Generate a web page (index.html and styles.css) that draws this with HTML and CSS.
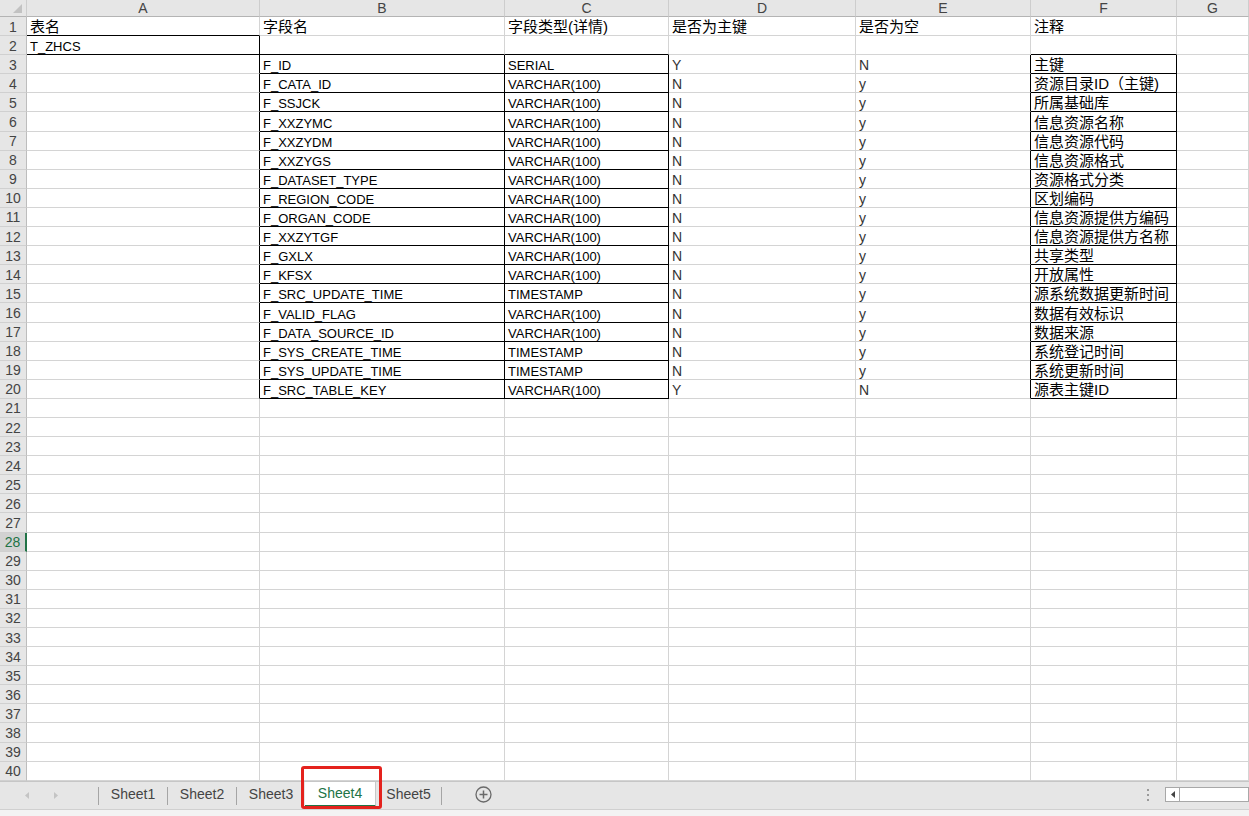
FILE: index.html
```html
<!DOCTYPE html>
<html lang="zh-CN">
<head>
<meta charset="utf-8">
<title>Sheet4</title>
<link rel="stylesheet" href="styles.css">
</head>
<body>
<div class="app">
  <div class="sheet">
    <div class="row hdr">
      <div class="corner"><svg width="9" height="9" viewBox="0 0 9 9"><polygon points="9,0 9,9 0,9" fill="#c2c2c2"/></svg></div>
      <div>A</div><div>B</div><div>C</div><div>D</div><div>E</div><div>F</div><div>G</div>
    </div>
    <div class="body">
      <div class="row"><div class="rh">1</div><div class="c b cn">表名</div><div class="c cn">字段名</div><div class="c cn">字段类型(详情)</div><div class="c cn">是否为主键</div><div class="c cn">是否为空</div><div class="c cn">注释</div><div class="c"></div></div>
      <div class="row"><div class="rh">2</div><div class="c r b">T_ZHCS</div><div class="c b"></div><div class="c b"></div><div class="c"></div><div class="c"></div><div class="c b"></div><div class="c"></div></div>
      <div class="row"><div class="rh">3</div><div class="c r"></div><div class="c r b">F_ID</div><div class="c r b">SERIAL</div><div class="c yn">Y</div><div class="c r yn">N</div><div class="c r b cn">主键</div><div class="c"></div></div>
      <div class="row"><div class="rh">4</div><div class="c r"></div><div class="c r b">F_CATA_ID</div><div class="c r b">VARCHAR(100)</div><div class="c yn">N</div><div class="c r yn">y</div><div class="c r b cn">资源目录ID（主键)</div><div class="c"></div></div>
      <div class="row"><div class="rh">5</div><div class="c r"></div><div class="c r b">F_SSJCK</div><div class="c r b">VARCHAR(100)</div><div class="c yn">N</div><div class="c r yn">y</div><div class="c r b cn">所属基础库</div><div class="c"></div></div>
      <div class="row"><div class="rh">6</div><div class="c r"></div><div class="c r b">F_XXZYMC</div><div class="c r b">VARCHAR(100)</div><div class="c yn">N</div><div class="c r yn">y</div><div class="c r b cn">信息资源名称</div><div class="c"></div></div>
      <div class="row"><div class="rh">7</div><div class="c r"></div><div class="c r b">F_XXZYDM</div><div class="c r b">VARCHAR(100)</div><div class="c yn">N</div><div class="c r yn">y</div><div class="c r b cn">信息资源代码</div><div class="c"></div></div>
      <div class="row"><div class="rh">8</div><div class="c r"></div><div class="c r b">F_XXZYGS</div><div class="c r b">VARCHAR(100)</div><div class="c yn">N</div><div class="c r yn">y</div><div class="c r b cn">信息资源格式</div><div class="c"></div></div>
      <div class="row"><div class="rh">9</div><div class="c r"></div><div class="c r b">F_DATASET_TYPE</div><div class="c r b">VARCHAR(100)</div><div class="c yn">N</div><div class="c r yn">y</div><div class="c r b cn">资源格式分类</div><div class="c"></div></div>
      <div class="row"><div class="rh">10</div><div class="c r"></div><div class="c r b">F_REGION_CODE</div><div class="c r b">VARCHAR(100)</div><div class="c yn">N</div><div class="c r yn">y</div><div class="c r b cn">区划编码</div><div class="c"></div></div>
      <div class="row"><div class="rh">11</div><div class="c r"></div><div class="c r b">F_ORGAN_CODE</div><div class="c r b">VARCHAR(100)</div><div class="c yn">N</div><div class="c r yn">y</div><div class="c r b cn">信息资源提供方编码</div><div class="c"></div></div>
      <div class="row"><div class="rh">12</div><div class="c r"></div><div class="c r b">F_XXZYTGF</div><div class="c r b">VARCHAR(100)</div><div class="c yn">N</div><div class="c r yn">y</div><div class="c r b cn">信息资源提供方名称</div><div class="c"></div></div>
      <div class="row"><div class="rh">13</div><div class="c r"></div><div class="c r b">F_GXLX</div><div class="c r b">VARCHAR(100)</div><div class="c yn">N</div><div class="c r yn">y</div><div class="c r b cn">共享类型</div><div class="c"></div></div>
      <div class="row"><div class="rh">14</div><div class="c r"></div><div class="c r b">F_KFSX</div><div class="c r b">VARCHAR(100)</div><div class="c yn">N</div><div class="c r yn">y</div><div class="c r b cn">开放属性</div><div class="c"></div></div>
      <div class="row"><div class="rh">15</div><div class="c r"></div><div class="c r b">F_SRC_UPDATE_TIME</div><div class="c r b">TIMESTAMP</div><div class="c yn">N</div><div class="c r yn">y</div><div class="c r b cn">源系统数据更新时间</div><div class="c"></div></div>
      <div class="row"><div class="rh">16</div><div class="c r"></div><div class="c r b">F_VALID_FLAG</div><div class="c r b">VARCHAR(100)</div><div class="c yn">N</div><div class="c r yn">y</div><div class="c r b cn">数据有效标识</div><div class="c"></div></div>
      <div class="row"><div class="rh">17</div><div class="c r"></div><div class="c r b">F_DATA_SOURCE_ID</div><div class="c r b">VARCHAR(100)</div><div class="c yn">N</div><div class="c r yn">y</div><div class="c r b cn">数据来源</div><div class="c"></div></div>
      <div class="row"><div class="rh">18</div><div class="c r"></div><div class="c r b">F_SYS_CREATE_TIME</div><div class="c r b">TIMESTAMP</div><div class="c yn">N</div><div class="c r yn">y</div><div class="c r b cn">系统登记时间</div><div class="c"></div></div>
      <div class="row"><div class="rh">19</div><div class="c r"></div><div class="c r b">F_SYS_UPDATE_TIME</div><div class="c r b">TIMESTAMP</div><div class="c yn">N</div><div class="c r yn">y</div><div class="c r b cn">系统更新时间</div><div class="c"></div></div>
      <div class="row"><div class="rh">20</div><div class="c r"></div><div class="c r b">F_SRC_TABLE_KEY</div><div class="c r b">VARCHAR(100)</div><div class="c yn">Y</div><div class="c r yn">N</div><div class="c r b cn">源表主键ID</div><div class="c"></div></div>
      <div class="row"><div class="rh">21</div><div class="c"></div><div class="c"></div><div class="c"></div><div class="c"></div><div class="c"></div><div class="c"></div><div class="c"></div></div>
      <div class="row"><div class="rh">22</div><div class="c"></div><div class="c"></div><div class="c"></div><div class="c"></div><div class="c"></div><div class="c"></div><div class="c"></div></div>
      <div class="row"><div class="rh">23</div><div class="c"></div><div class="c"></div><div class="c"></div><div class="c"></div><div class="c"></div><div class="c"></div><div class="c"></div></div>
      <div class="row"><div class="rh">24</div><div class="c"></div><div class="c"></div><div class="c"></div><div class="c"></div><div class="c"></div><div class="c"></div><div class="c"></div></div>
      <div class="row"><div class="rh">25</div><div class="c"></div><div class="c"></div><div class="c"></div><div class="c"></div><div class="c"></div><div class="c"></div><div class="c"></div></div>
      <div class="row"><div class="rh">26</div><div class="c"></div><div class="c"></div><div class="c"></div><div class="c"></div><div class="c"></div><div class="c"></div><div class="c"></div></div>
      <div class="row"><div class="rh">27</div><div class="c"></div><div class="c"></div><div class="c"></div><div class="c"></div><div class="c"></div><div class="c"></div><div class="c"></div></div>
      <div class="row"><div class="rh sel">28</div><div class="c"></div><div class="c"></div><div class="c"></div><div class="c"></div><div class="c"></div><div class="c"></div><div class="c"></div></div>
      <div class="row"><div class="rh">29</div><div class="c"></div><div class="c"></div><div class="c"></div><div class="c"></div><div class="c"></div><div class="c"></div><div class="c"></div></div>
      <div class="row"><div class="rh">30</div><div class="c"></div><div class="c"></div><div class="c"></div><div class="c"></div><div class="c"></div><div class="c"></div><div class="c"></div></div>
      <div class="row"><div class="rh">31</div><div class="c"></div><div class="c"></div><div class="c"></div><div class="c"></div><div class="c"></div><div class="c"></div><div class="c"></div></div>
      <div class="row"><div class="rh">32</div><div class="c"></div><div class="c"></div><div class="c"></div><div class="c"></div><div class="c"></div><div class="c"></div><div class="c"></div></div>
      <div class="row"><div class="rh">33</div><div class="c"></div><div class="c"></div><div class="c"></div><div class="c"></div><div class="c"></div><div class="c"></div><div class="c"></div></div>
      <div class="row"><div class="rh">34</div><div class="c"></div><div class="c"></div><div class="c"></div><div class="c"></div><div class="c"></div><div class="c"></div><div class="c"></div></div>
      <div class="row"><div class="rh">35</div><div class="c"></div><div class="c"></div><div class="c"></div><div class="c"></div><div class="c"></div><div class="c"></div><div class="c"></div></div>
      <div class="row"><div class="rh">36</div><div class="c"></div><div class="c"></div><div class="c"></div><div class="c"></div><div class="c"></div><div class="c"></div><div class="c"></div></div>
      <div class="row"><div class="rh">37</div><div class="c"></div><div class="c"></div><div class="c"></div><div class="c"></div><div class="c"></div><div class="c"></div><div class="c"></div></div>
      <div class="row"><div class="rh">38</div><div class="c"></div><div class="c"></div><div class="c"></div><div class="c"></div><div class="c"></div><div class="c"></div><div class="c"></div></div>
      <div class="row"><div class="rh">39</div><div class="c"></div><div class="c"></div><div class="c"></div><div class="c"></div><div class="c"></div><div class="c"></div><div class="c"></div></div>
      <div class="row"><div class="rh">40</div><div class="c"></div><div class="c"></div><div class="c"></div><div class="c"></div><div class="c"></div><div class="c"></div><div class="c"></div></div>
    </div>
  </div>
  <div class="tabs">
    <div class="nav">
      <svg class="arrow" width="5" height="7" viewBox="0 0 5 7"><polygon points="4,0 4,7 0,3.5" fill="#c4c4c4"/></svg>
      <svg class="arrow" width="5" height="7" viewBox="0 0 5 7"><polygon points="1,0 1,7 5,3.5" fill="#c4c4c4"/></svg>
    </div>
    <div class="sep"></div>
    <div class="tab">Sheet1</div>
    <div class="sep"></div>
    <div class="tab">Sheet2</div>
    <div class="sep"></div>
    <div class="tab">Sheet3</div>
    <div class="tab active">Sheet4</div>
    <div class="tab last">Sheet5</div>
    <div class="sep"></div>
    <div class="add"><svg width="17" height="17" viewBox="0 0 17 17"><circle cx="8.5" cy="8.5" r="7.5" fill="none" stroke="#6a6a6a" stroke-width="1.3"/><path d="M8.5 4.5v8M4.5 8.5h8" stroke="#6a6a6a" stroke-width="1.5"/></svg></div>
    <div class="spacer"></div>
    <div class="dots"><span></span><span></span><span></span></div>
    <div class="hscroll">
      <div class="hbtn"><svg width="4" height="7" viewBox="0 0 4 7"><polygon points="4,0 4,7 0,3.5" fill="#444"/></svg></div>
    </div>
  </div>
  <div class="status"></div>
  <div class="highlight"></div>
</div>
</body>
</html>
```
FILE: styles.css
```css
* { box-sizing: border-box; }
body {
  margin: 0;
  background: #fff;
  font-family: "Liberation Sans", "Noto Sans CJK SC", sans-serif;
}
.app {
  position: relative;
  width: 1249px;
  height: 816px;
  display: flex;
  flex-direction: column;
  overflow: hidden;
}
.sheet {
  height: 781px;
  display: flex;
  flex-direction: column;
}
.row {
  display: grid;
  grid-template-columns: 27px 233px 245px 164px 187px 175px 146px 72px;
}
.hdr { height: 17px; flex: 0 0 17px; }
.hdr > div {
  background: #e6e6e6;
  border-right: 1px solid #cdcdcd;
  border-bottom: 1px solid #b4b4b4;
  color: #444;
  font-size: 14px;
  line-height: 16px;
  display: flex;
  align-items: center;
  justify-content: center;
}
.hdr > .corner {
  align-items: flex-end;
  justify-content: flex-end;
  padding: 0 4px 3px 0;
}
.body {
  flex: 1;
  display: flex;
  flex-direction: column;
}
.body .row { flex: 1 1 0; min-height: 0; }
.rh {
  background: #e6e6e6;
  border-right: 1px solid #bdbdbd;
  border-bottom: 1px solid #d0d0d0;
  color: #444;
  font-size: 14px;
  display: flex;
  align-items: center;
  justify-content: center;
  padding-top: 1px;
}
.rh.sel {
  background: #d2d2d2;
  color: #217346;
  border-right: 2px solid #217346;
}
.c {
  border-right: 1px solid #d4d4d4;
  border-bottom: 1px solid #d4d4d4;
  padding-left: 3px;
  font-size: 13px;
  line-height: 15px;
  color: #000;
  white-space: nowrap;
  overflow: hidden;
  display: flex;
  align-items: flex-end;
}
.c.cn { font-size: 15px; line-height: 17px; }
.c.yn { color: #333; font-size: 14px; }
.c.r { border-right-color: #000; }
.c.b { border-bottom-color: #000; }

.tabs {
  height: 28px;
  flex: 0 0 28px;
  background: #e6e6e6;
  border-top: 1px solid #c6c6c6;
  display: flex;
  align-items: center;
  color: #444;
  font-size: 14px;
}
.nav {
  width: 98px;
  display: flex;
  align-items: center;
  gap: 23px;
  padding-left: 25px;
}
.sep {
  width: 1px;
  height: 18px;
  background: #a5a5a5;
}
.tab {
  width: 68px;
  height: 100%;
  display: flex;
  align-items: center;
  justify-content: center;
  padding-bottom: 3px;
}
.tab.active {
  width: 71px;
  height: 25px;
  align-self: flex-start;
  background: #fff;
  color: #217346;
  border-bottom: 2px solid #217346;
  border-right: 1px solid #c8c8c8;
  padding-bottom: 1px;
}
.tab.last { width: 65px; }
.add {
  margin-left: 33px;
  display: flex;
  align-items: center;
  padding-bottom: 2px;
}
.spacer { flex: 1; }
.dots {
  display: flex;
  flex-direction: column;
  gap: 3px;
  margin-right: 16px;
  margin-bottom: 2px;
}
.dots span {
  width: 2px;
  height: 2px;
  background: #9a9a9a;
}
.hscroll {
  width: 84px;
  flex: 0 0 84px;
  height: 15px;
  margin-bottom: 2px;
  background: #fff;
  border: 1px solid #a8a8a8;
  display: flex;
}
.hbtn {
  width: 14px;
  border-right: 1px solid #a8a8a8;
  display: flex;
  align-items: center;
  justify-content: center;
}
.status {
  flex: 1;
  background: #f3f3f3;
  border-top: 1px solid #d0d0d0;
}
.highlight {
  position: absolute;
  left: 301px;
  top: 766px;
  width: 81px;
  height: 43px;
  border: 3px solid #e4221d;
  border-radius: 3px;
}
```
